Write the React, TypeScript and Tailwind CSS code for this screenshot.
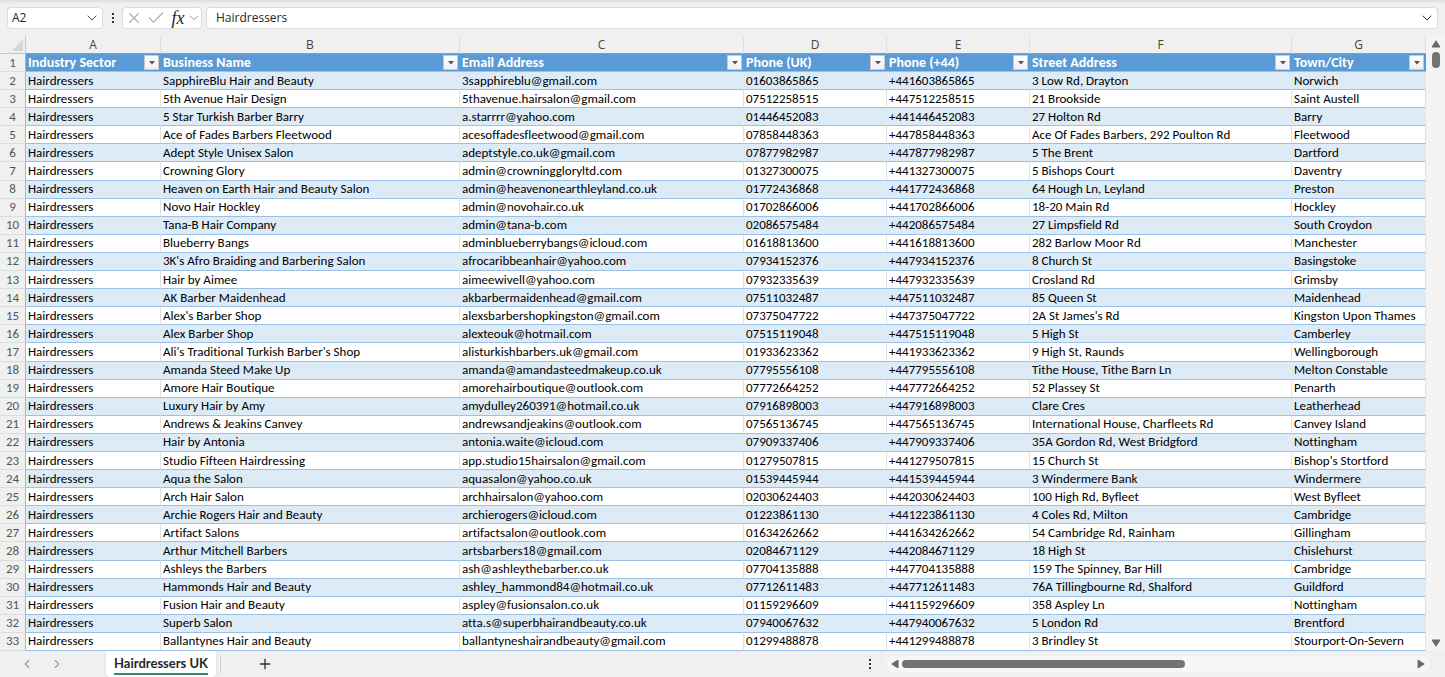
import { Check, ChevronDown, ChevronLeft, ChevronRight, Plus, X } from "lucide-react";

const COLUMNS = [
  { letter: "A", title: "Industry Sector", width: "w-[135px]" },
  { letter: "B", title: "Business Name", width: "w-[299px]" },
  { letter: "C", title: "Email Address", width: "w-[284px]" },
  { letter: "D", title: "Phone (UK)", width: "w-[143px]" },
  { letter: "E", title: "Phone (+44)", width: "w-[143px]" },
  { letter: "F", title: "Street Address", width: "w-[262px]" },
  { letter: "G", title: "Town/City", width: "w-[134px]" },
];

const SECTOR = "Hairdressers";

// name, email, UK phone, street, town
const ROWS = [
  ["SapphireBlu Hair and Beauty", "3sapphireblu@gmail.com", "01603865865", "3 Low Rd, Drayton", "Norwich"],
  ["5th Avenue Hair Design", "5thavenue.hairsalon@gmail.com", "07512258515", "21 Brookside", "Saint Austell"],
  ["5 Star Turkish Barber Barry", "a.starrrr@yahoo.com", "01446452083", "27 Holton Rd", "Barry"],
  ["Ace of Fades Barbers Fleetwood", "acesoffadesfleetwood@gmail.com", "07858448363", "Ace Of Fades Barbers, 292 Poulton Rd", "Fleetwood"],
  ["Adept Style Unisex Salon", "adeptstyle.co.uk@gmail.com", "07877982987", "5 The Brent", "Dartford"],
  ["Crowning Glory", "admin@crowninggloryltd.com", "01327300075", "5 Bishops Court", "Daventry"],
  ["Heaven on Earth Hair and Beauty Salon", "admin@heavenonearthleyland.co.uk", "01772436868", "64 Hough Ln, Leyland", "Preston"],
  ["Novo Hair Hockley", "admin@novohair.co.uk", "01702866006", "18-20 Main Rd", "Hockley"],
  ["Tana-B Hair Company", "admin@tana-b.com", "02086575484", "27 Limpsfield Rd", "South Croydon"],
  ["Blueberry Bangs", "adminblueberrybangs@icloud.com", "01618813600", "282 Barlow Moor Rd", "Manchester"],
  ["3K's Afro Braiding and Barbering Salon", "afrocaribbeanhair@yahoo.com", "07934152376", "8 Church St", "Basingstoke"],
  ["Hair by Aimee", "aimeewivell@yahoo.com", "07932335639", "Crosland Rd", "Grimsby"],
  ["AK Barber Maidenhead", "akbarbermaidenhead@gmail.com", "07511032487", "85 Queen St", "Maidenhead"],
  ["Alex's Barber Shop", "alexsbarbershopkingston@gmail.com", "07375047722", "2A St James's Rd", "Kingston Upon Thames"],
  ["Alex Barber Shop", "alexteouk@hotmail.com", "07515119048", "5 High St", "Camberley"],
  ["Ali's Traditional Turkish Barber's Shop", "alisturkishbarbers.uk@gmail.com", "01933623362", "9 High St, Raunds", "Wellingborough"],
  ["Amanda Steed Make Up", "amanda@amandasteedmakeup.co.uk", "07795556108", "Tithe House, Tithe Barn Ln", "Melton Constable"],
  ["Amore Hair Boutique", "amorehairboutique@outlook.com", "07772664252", "52 Plassey St", "Penarth"],
  ["Luxury Hair by Amy", "amydulley260391@hotmail.co.uk", "07916898003", "Clare Cres", "Leatherhead"],
  ["Andrews & Jeakins Canvey", "andrewsandjeakins@outlook.com", "07565136745", "International House, Charfleets Rd", "Canvey Island"],
  ["Hair by Antonia", "antonia.waite@icloud.com", "07909337406", "35A Gordon Rd, West Bridgford", "Nottingham"],
  ["Studio Fifteen Hairdressing", "app.studio15hairsalon@gmail.com", "01279507815", "15 Church St", "Bishop's Stortford"],
  ["Aqua the Salon", "aquasalon@yahoo.co.uk", "01539445944", "3 Windermere Bank", "Windermere"],
  ["Arch Hair Salon", "archhairsalon@yahoo.com", "02030624403", "100 High Rd, Byfleet", "West Byfleet"],
  ["Archie Rogers Hair and Beauty", "archierogers@icloud.com", "01223861130", "4 Coles Rd, Milton", "Cambridge"],
  ["Artifact Salons", "artifactsalon@outlook.com", "01634262662", "54 Cambridge Rd, Rainham", "Gillingham"],
  ["Arthur Mitchell Barbers", "artsbarbers18@gmail.com", "02084671129", "18 High St", "Chislehurst"],
  ["Ashleys the Barbers", "ash@ashleythebarber.co.uk", "07704135888", "159 The Spinney, Bar Hill", "Cambridge"],
  ["Hammonds Hair and Beauty", "ashley_hammond84@hotmail.co.uk", "07712611483", "76A Tillingbourne Rd, Shalford", "Guildford"],
  ["Fusion Hair and Beauty", "aspley@fusionsalon.co.uk", "01159296609", "358 Aspley Ln", "Nottingham"],
  ["Superb Salon", "atta.s@superbhairandbeauty.co.uk", "07940067632", "5 London Rd", "Brentford"],
  ["Ballantynes Hair and Beauty", "ballantyneshairandbeauty@gmail.com", "01299488878", "3 Brindley St", "Stourport-On-Severn"],
];

function Dots() {
  return (
    <svg viewBox="0 0 4 12" className="h-3 w-1 shrink-0 fill-[#333333]" aria-hidden>
      <rect x="1" y="1" width="2" height="2" />
      <rect x="1" y="5" width="2" height="2" />
      <rect x="1" y="9" width="2" height="2" />
    </svg>
  );
}

/** Solid scrollbar arrow, pointing up unless rotated. */
function Arrow({ className }: { className: string }) {
  return (
    <svg viewBox="0 0 10 8" className={className} aria-hidden>
      <path d="M5 0.8 L9 7 H1 Z" fill="#6b6b6b" stroke="#6b6b6b" strokeLinejoin="round" />
    </svg>
  );
}

function FormulaBar() {
  return (
    <div className="flex h-9 shrink-0 items-center bg-linear-to-b from-[#dedede] to-[#f0f0f0] to-10% pr-[7px] pl-[7px] font-['Open_Sans',sans-serif] text-xs text-[#262626]">
      <div className="flex h-[22px] w-24 items-center rounded-sm border border-[#dcdcdc] bg-white pr-0.5">
        <input aria-label="Name box" defaultValue="A2" className="w-full min-w-0 pl-1 outline-none" />
        <button aria-label="Show names">
          <ChevronDown className="h-4 w-4 text-[#444444]" strokeWidth={1.5} />
        </button>
      </div>
      <div className="flex w-[19px] justify-center">
        <Dots />
      </div>
      <div className="flex h-[22px] w-20 items-center rounded-sm border border-[#dcdcdc] bg-white pl-0.5">
        <button aria-label="Cancel" className="w-[22px]">
          <X className="h-[18px] w-[18px] text-[#b0b0b0]" strokeWidth={1.5} />
        </button>
        <button aria-label="Enter" className="w-6">
          <Check className="h-5 w-5 text-[#b0b0b0]" strokeWidth={1.5} />
        </button>
        <button
          aria-label="Insert function"
          className="w-[18px] pl-0.5 text-left font-['Liberation_Serif',serif] text-lg leading-4 italic"
        >
          fx
        </button>
        <button aria-label="Recent functions">
          <ChevronDown className="h-3.5 w-3.5 text-[#8a8a8a]" strokeWidth={1.5} />
        </button>
      </div>
      <div className="ml-1 flex h-[22px] min-w-0 flex-1 items-center rounded-sm border border-[#dcdcdc] bg-white pr-0.5">
        <input aria-label="Formula" defaultValue={SECTOR} className="min-w-0 flex-1 pl-[9px] outline-none" />
        <button aria-label="Expand formula bar">
          <ChevronDown className="h-4 w-4 text-[#333333]" strokeWidth={1.5} />
        </button>
      </div>
    </div>
  );
}

function Sheet() {
  return (
    <table className="h-full w-full table-fixed border-separate border-spacing-0 text-left font-['Carlito','Lato',sans-serif] text-[13px] leading-4 whitespace-nowrap text-black [font-variant-ligatures:none]">
      <colgroup>
        <col className="w-[26px]" />
        {COLUMNS.map((c) => (
          <col key={c.letter} className={c.width} />
        ))}
      </colgroup>
      <thead>
        <tr className="h-[18px] bg-[#f0f0f0] text-center font-['Open_Sans',sans-serif] text-xs text-[#444444]">
          <th className="border-r border-b border-r-[#c6c6c6] border-b-[#c6c6c6] p-0">
            <svg viewBox="0 0 12 12" className="ml-auto h-3 w-3.5" aria-hidden>
              <path d="M11 0 V12 H0 Z" fill="#d6d6d6" />
            </svg>
          </th>
          {COLUMNS.map((c) => (
            <th
              key={c.letter}
              scope="col"
              className="border-r border-b border-r-[#e0e0e0] border-b-[#9a9a9a] p-0 text-center font-normal"
            >
              {c.letter}
            </th>
          ))}
        </tr>
        <tr className="h-[18px] bg-[#5b9bd5] text-white">
          <RowNumber n={1} />
          {COLUMNS.map((c) => (
            <th key={c.letter} scope="col" className="border-b border-b-[#9bc2e6] p-0 pl-0.5 text-sm leading-4 font-bold">
              <div className="flex items-center justify-between pr-0.5">
                {c.title}
                <button
                  aria-label={`Filter ${c.title}`}
                  className="grid h-[15px] w-[15px] place-items-center border border-[#c8c8c8] bg-linear-to-b from-white to-[#eef0f4]"
                >
                  <svg viewBox="0 0 6 4" className="h-1 w-1.5 fill-[#555555]" aria-hidden>
                    <path d="M0 0 H6 L3 3.6 Z" />
                  </svg>
                </button>
              </div>
            </th>
          ))}
        </tr>
      </thead>
      <tbody>
        {ROWS.map(([name, email, phone, street, town], i) => (
          <tr key={email} className="group h-[18px] bg-white odd:bg-[#ddebf7]">
            <RowNumber n={i + 2} />
            {[SECTOR, name, email, phone, `+44${phone.slice(1)}`, street, town].map((value, col) => (
              <td
                key={col}
                className="border-r border-b border-r-[#e1e1e1] border-b-[#9bc2e6] p-0 pl-0.5 group-odd:border-r-[#ddebf7]"
              >
                {value}
              </td>
            ))}
          </tr>
        ))}
      </tbody>
    </table>
  );
}

function RowNumber({ n }: { n: number }) {
  return (
    <th
      scope="row"
      className="border-r border-b border-r-[#b4b4b4] border-b-[#dcdcdc] bg-[#f0f0f0] p-0 text-center font-normal text-[#555555]"
    >
      {n}
    </th>
  );
}

function SheetTabs() {
  return (
    <div className="flex h-[26px] shrink-0 items-center bg-[#f0f0f0] pr-[15px]">
      <button aria-label="Previous sheet" className="ml-5">
        <ChevronLeft className="h-3.5 w-3.5 text-[#9a9a9a]" strokeWidth={2} />
      </button>
      <button aria-label="Next sheet" className="ml-4">
        <ChevronRight className="h-3.5 w-3.5 text-[#9a9a9a]" strokeWidth={2} />
      </button>
      <button className="ml-[42px] flex h-full items-start rounded-b-sm bg-white px-2 font-['Lato',sans-serif] text-[13px] font-bold text-[#262626] shadow-sm">
        <span className="border-b-2 border-[#2f8f5f] pt-0.5 leading-5">Hairdressers UK</span>
      </button>
      <span className="ml-1 h-[18px] w-px bg-[#d0d0d0]" />
      <button aria-label="New sheet" className="ml-9">
        <Plus className="h-4 w-4 text-[#333333]" strokeWidth={2} />
      </button>
      <div className="ml-auto flex w-[562px] items-center">
        <Dots />
        <div className="ml-3.5 flex h-4 flex-1 items-center rounded-lg bg-[#f6f6f6] px-1">
          <button aria-label="Scroll left">
            <Arrow className="h-2 w-2.5 -rotate-90" />
          </button>
          <div className="ml-0.5 flex-1">
            <div className="h-2 w-[55%] rounded-full bg-[#737373]" />
          </div>
          <button aria-label="Scroll right">
            <Arrow className="h-2 w-2.5 rotate-90" />
          </button>
        </div>
      </div>
    </div>
  );
}

export default function App() {
  return (
    <div className="flex h-screen flex-col bg-[#f0f0f0]">
      <FormulaBar />
      <main className="flex min-h-0 flex-1">
        <div className="h-full min-w-0 flex-1 overflow-hidden">
          <Sheet />
        </div>
        <div className="flex w-[19px] shrink-0 flex-col items-center bg-[#f4f4f4] py-1">
          <button aria-label="Scroll up">
            <Arrow className="h-2 w-2.5" />
          </button>
          <div className="mt-1 h-4 w-2 rounded-full bg-[#737373]" />
          <button aria-label="Scroll down" className="mt-auto">
            <Arrow className="h-2 w-2.5 rotate-180" />
          </button>
        </div>
      </main>
      <SheetTabs />
    </div>
  );
}
